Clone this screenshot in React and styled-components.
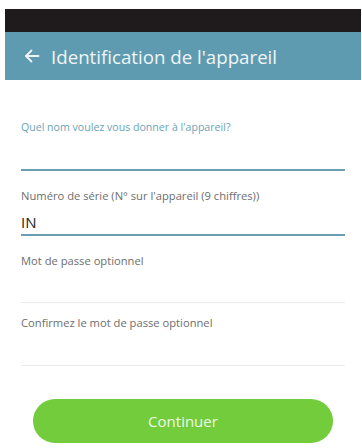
import React from "react";
import styled, { createGlobalStyle } from "styled-components";

const Global = createGlobalStyle`
  html, body {
    margin: 0;
    padding: 0;
    background: #ffffff;
    font-family: "Open Sans", "Noto Sans", sans-serif;
  }
`;

const Screen = styled.div`
  margin: 9px 1px 0 5px;
  display: flex;
  flex-direction: column;
`;

const StatusBar = styled.div`
  height: 23px;
  background: #1f1a1c;
`;

const AppBar = styled.header`
  height: 48px;
  background: #5f9bb0;
  display: flex;
  align-items: center;
  padding-left: 19px;
  gap: 11px;
  color: #eef5f7;
`;

const Title = styled.h1`
  margin: 0;
  font-size: 18.7px;
  font-weight: 400;
`;

const Form = styled.form`
  display: flex;
  flex-direction: column;
  padding: 40px 16px 0;
`;

const Field = styled.label`
  display: flex;
  flex-direction: column;
  padding-top: ${p => p.$gap || 0}px;
`;

const Label = styled.span`
  font-size: ${p => (p.$focused ? 10.6 : 11.2)}px;
  line-height: 14px;
  color: ${p => (p.$focused ? "#6ba3b8" : "#6e6e6e")};
`;

const Input = styled.input`
  height: ${p => p.$h}px;
  box-sizing: border-box;
  border: none;
  border-bottom: ${p => (p.$active ? "2px solid #6a9fb1" : "1px solid #ececec")};
  outline: none;
  padding: 7px 0 0;
  font-family: inherit;
  font-size: 15px;
  color: #222;
  background: transparent;
`;

const Button = styled.button`
  margin: 33px auto 0;
  width: 300px;
  height: 44px;
  border: none;
  border-radius: 22px;
  background: #72cc3b;
  color: #eef9e6;
  font-family: inherit;
  font-size: 15px;
`;

const Arrow = () => (
  <svg width="16" height="16" viewBox="0 0 16 16" fill="none" stroke="#eef5f7" strokeWidth="1.8" strokeLinecap="round" strokeLinejoin="round">
    <path d="M14.5 8H2" />
    <path d="M7.5 2.5L2 8l5.5 5.5" />
  </svg>
);

export default function App() {
  return (
    <>
      <Global />
      <Screen>
        <StatusBar />
        <AppBar>
          <Arrow />
          <Title>Identification de l'appareil</Title>
        </AppBar>
        <Form onSubmit={e => e.preventDefault()}>
          <Field>
            <Label $focused>Quel nom voulez vous donner à l'appareil?</Label>
            <Input $h={37} $active />
          </Field>
          <Field $gap={18}>
            <Label>Numéro de série (N° sur l'appareil (9 chiffres))</Label>
            <Input $h={33} $active defaultValue="IN" />
          </Field>
          <Field $gap={18}>
            <Label>Mot de passe optionnel</Label>
            <Input $h={35} type="password" />
          </Field>
          <Field $gap={13}>
            <Label>Confirmez le mot de passe optionnel</Label>
            <Input $h={36} type="password" />
          </Field>
          <Button type="submit">Continuer</Button>
        </Form>
      </Screen>
    </>
  );
}
